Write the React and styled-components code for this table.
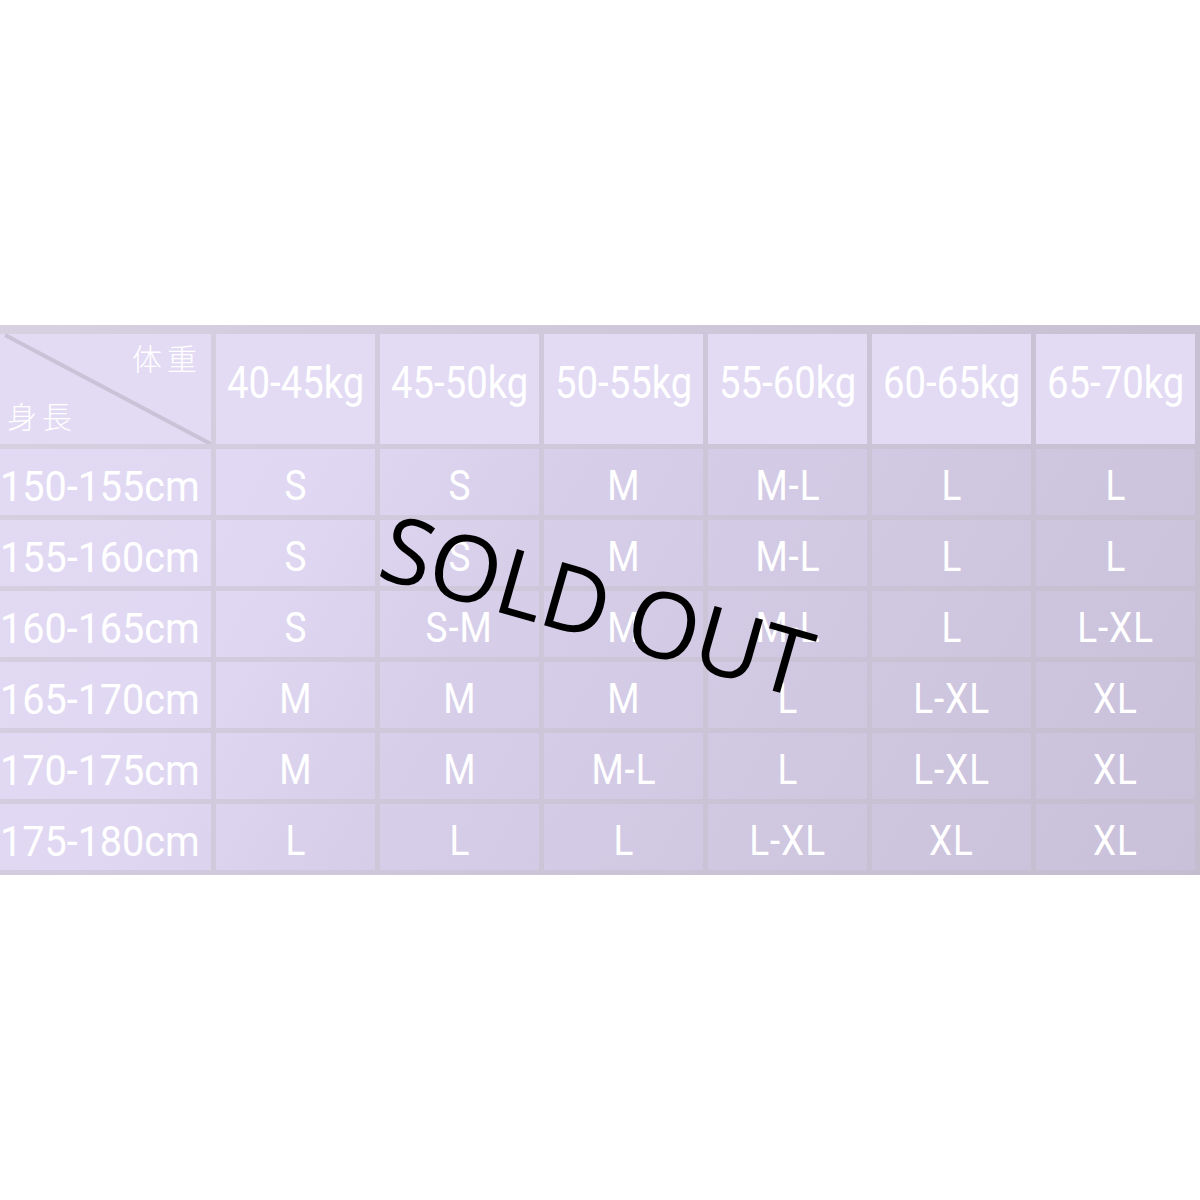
import React from 'react'
import styled, { createGlobalStyle } from 'styled-components'

const weights = ['40-45kg', '45-50kg', '50-55kg', '55-60kg', '60-65kg', '65-70kg']

const rows = [
  { height: '150-155cm', sizes: ['S', 'S', 'M', 'M-L', 'L', 'L'] },
  { height: '155-160cm', sizes: ['S', 'S', 'M', 'M-L', 'L', 'L'] },
  { height: '160-165cm', sizes: ['S', 'S-M', 'M', 'M-L', 'L', 'L-XL'] },
  { height: '165-170cm', sizes: ['M', 'M', 'M', 'L', 'L-XL', 'XL'] },
  { height: '170-175cm', sizes: ['M', 'M', 'M-L', 'L', 'L-XL', 'XL'] },
  { height: '175-180cm', sizes: ['L', 'L', 'L', 'L-XL', 'XL', 'XL'] },
]

const Global = createGlobalStyle`
  body {
    margin: 0;
    background: #fff;
    font-family: Roboto, "Liberation Sans", sans-serif;
  }
`

const Page = styled.div`
  width: 1200px;
  height: 1200px;
  padding-top: 325px;
  box-sizing: border-box;
  overflow: hidden;
`

const ChartWrap = styled.div`
  position: relative;
`

const Chart = styled.div`
  display: grid;
  grid-template-columns: 211px repeat(6, 1fr);
  grid-template-rows: 110px repeat(6, 66px);
  gap: 5px;
  padding: 9px 5px 5px 0;
  background: linear-gradient(120deg, #d9d3e3 0%, #d0c9dc 40%, #c7c0d2 75%, #c2bbcc 100%) fixed;
`

const Cell = styled.div`
  position: relative;
  display: flex;
  align-items: center;
  justify-content: ${(p) => (p.$left ? 'flex-start' : 'center')};
  color: #fff;
  overflow: hidden;
  background: ${(p) =>
    p.$head
      ? '#e3dbf4'
      : 'linear-gradient(120deg, #e4dcf5 0%, #e0d8f2 31%, #d7cfea 44%, #cfc6e0 68%, #c8bfd9 92%) fixed'};
`

const Text = styled.span`
  display: inline-block;
  font-size: ${(p) => p.$size || 42}px;
  font-weight: 400;
  line-height: 1;
  letter-spacing: ${(p) => p.$ls || 0}px;
  transform: scaleX(${(p) => p.$sx || 0.9});
  transform-origin: ${(p) => (p.$left ? 'left center' : 'center')};
  white-space: nowrap;
  margin: ${(p) => p.$m || '0'};
`

const Corner = styled.div`
  position: relative;
  background: #e3dbf4;
  color: #fff;
  font-family: "Noto Sans CJK JP", "Noto Sans CJK SC", sans-serif;
  font-weight: 300;
  overflow: hidden;
`

const CornerLine = styled.svg`
  position: absolute;
  inset: 0;
`

const CornerLabel = styled.span`
  position: absolute;
  font-size: 30px;
  letter-spacing: 5px;
  line-height: 1;
  left: ${(p) => p.$x}px;
  top: ${(p) => p.$y}px;
`

const SoldOut = styled.div`
  position: absolute;
  left: 597px;
  top: 279px;
  transform: translate(-50%, -50%) rotate(16deg);
  font-family: "Open Sans", "Noto Sans", sans-serif;
  font-size: 92px;
  font-weight: 400;
  line-height: 1;
  color: #000;
  white-space: nowrap;
  letter-spacing: -1px;
`

export default function App() {
  return (
    <Page>
      <Global />
      <ChartWrap>
        <Chart>
          <Corner>
            <CornerLine width="211" height="110">
              <line x1="5" y1="1" x2="211" y2="110" stroke="#cac2d6" strokeWidth="4" />
            </CornerLine>
            <CornerLabel $x={132} $y={8}>体重</CornerLabel>
            <CornerLabel $x={7} $y={66}>身長</CornerLabel>
          </Corner>
          {weights.map((w) => (
            <Cell key={w} $head>
              <Text $size={45} $sx={0.85} $m="0 0 14px">{w}</Text>
            </Cell>
          ))}
          {rows.map((r) => (
            <React.Fragment key={r.height}>
              <Cell $left>
                <Text $left $sx={0.92} $size={43} $m="8px 0 0 0">{r.height}</Text>
              </Cell>
              {r.sizes.map((s, i) => (
                <Cell key={i}>
                  <Text $sx={0.88} $ls={1} $m="8px 0 0">{s}</Text>
                </Cell>
              ))}
            </React.Fragment>
          ))}
        </Chart>
        <SoldOut>SOLD OUT</SoldOut>
      </ChartWrap>
    </Page>
  )
}
